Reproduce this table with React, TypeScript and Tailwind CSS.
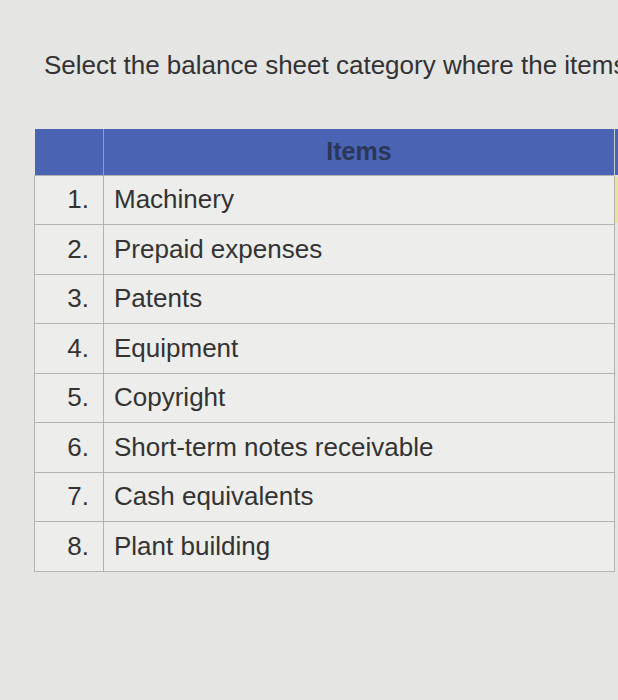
const items = [
  'Machinery',
  'Prepaid expenses',
  'Patents',
  'Equipment',
  'Copyright',
  'Short-term notes receivable',
  'Cash equivalents',
  'Plant building',
];

export default function App() {
  return (
    <div
      className="w-[618px] h-[700px] overflow-hidden bg-[#e5e5e3] text-[#333]"
      style={{ fontFamily: '"Liberation Sans", Arial, sans-serif' }}
    >
      <p className="pt-[46px] pl-[44px] text-[26px] whitespace-nowrap">
        Select the balance sheet category where the items
      </p>

      <table className="mt-[44px] ml-[34px] border-collapse table-fixed w-[620px]">
        <colgroup>
          <col className="w-[69px]" />
          <col className="w-[511px]" />
          <col className="w-[40px]" />
        </colgroup>
        <thead>
          <tr className="h-[46px] bg-[#4a63b3]">
            <th className="border-r border-[#8c9bd0]"></th>
            <th className="text-[25px] font-bold text-[#2c3657] text-center border-r border-[#c9cbd6]">
              Items
            </th>
            <th></th>
          </tr>
        </thead>
        <tbody>
          {items.map((item, i) => (
            <tr key={item} className="h-[49.5px] bg-[#ededeb]">
              <td className="border border-[#b3b3b3] text-right pr-[14px] text-[26px]">
                {i + 1}.
              </td>
              <td className="border border-[#b3b3b3] pl-[10px] text-[26px] whitespace-nowrap">
                {item}
              </td>
              <td className="bg-[#e5e5e3]">
                {i === 0 && <div className="w-[3px] h-[46px] bg-[#e8e49a]" />}
              </td>
            </tr>
          ))}
        </tbody>
      </table>
    </div>
  );
}
